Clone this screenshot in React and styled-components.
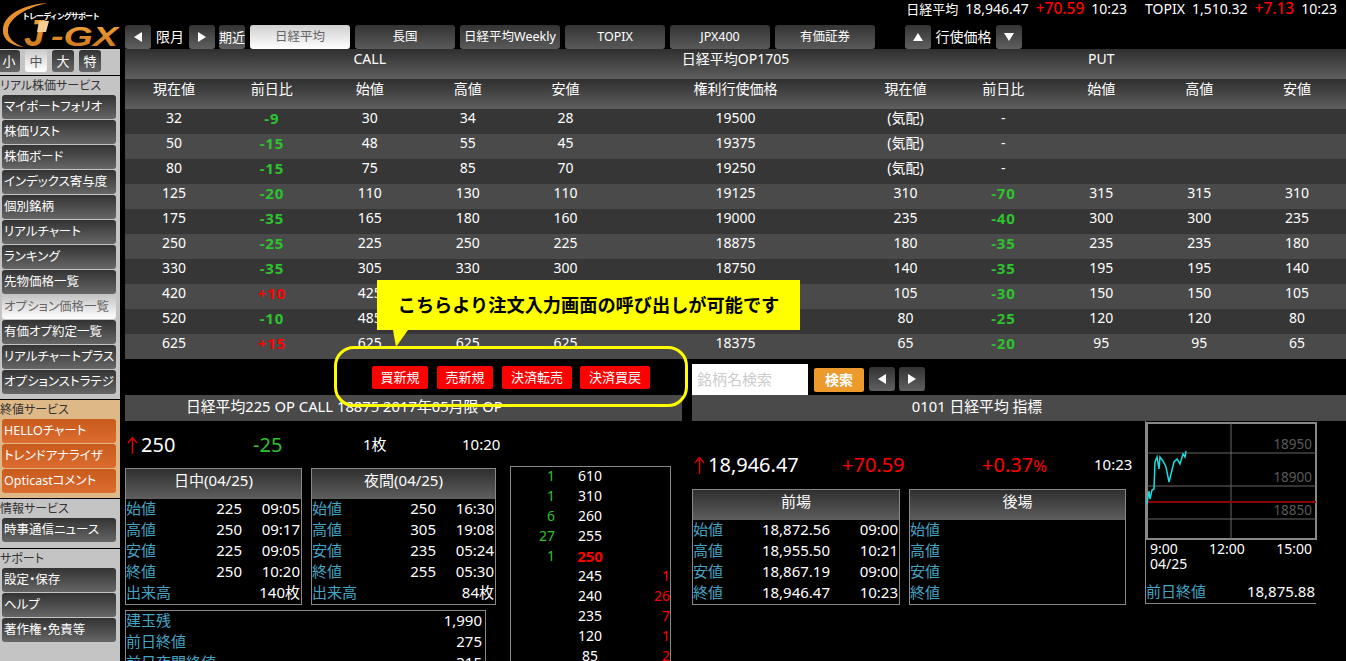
import React from 'react';
import styled, { createGlobalStyle, css } from 'styled-components';

const BAR = 'linear-gradient(#2f2f2f, #5e5e5e)';
const CYAN = '#45a4c4';
const GREEN = '#2ec22e';
const RED = '#ff0000';

const GlobalStyle = createGlobalStyle`
  html, body { margin: 0; padding: 0; background: #000; }
  body {
    color: #fff;
    font-family: "Noto Sans", "Noto Sans CJK JP", sans-serif;
    font-size: 14px;
    line-height: 1;
    overflow: hidden;
  }
  * { box-sizing: border-box; }
`;

const Page = styled.div`
  position: relative;
  width: 1346px;
  height: 661px;
  overflow: hidden;
  background: #000;
`;

const Header = styled.header`
  display: flex;
  height: 49px;
`;

const LogoBox = styled.div`
  width: 125px;
  flex: none;
`;

const HeaderRight = styled.div`
  flex: 1;
  display: flex;
  flex-direction: column;
`;

const Ticker = styled.div`
  height: 25px;
  padding: 1px 9px 8px 0;
  display: flex;
  justify-content: flex-end;
  align-items: center;
  gap: 7px;
  font-size: 14px;
`;

const TickerName = styled.span`
  font-size: 13px;
`;

const TickerGap = styled.span`
  width: 4px;
`;

const Up = styled.span`
  color: ${RED};
  font-size: 15.5px;
  font-weight: 500;
`;

const TabRow = styled.nav`
  height: 24px;
  display: flex;
  align-items: stretch;
`;

const ArrowButton = styled.button`
  width: 26px;
  height: 24px;
  flex: none;
  padding: 0;
  border: 0;
  border-radius: 3px;
  background: linear-gradient(#333, #606060);
  display: flex;
  align-items: center;
  justify-content: center;
  margin: ${(p) => p.$margin || 0};
  &::before {
    content: '';
    display: block;
    border-style: solid;
    border-color: transparent;
    ${(p) => p.$dir === 'left' && css`border-width: 5px 8px 5px 0; border-right-color: #fff;`}
    ${(p) => p.$dir === 'right' && css`border-width: 5px 0 5px 8px; border-left-color: #fff;`}
    ${(p) => p.$dir === 'up' && css`border-width: 0 5px 8px 5px; border-bottom-color: #fff;`}
    ${(p) => p.$dir === 'down' && css`border-width: 8px 5px 0 5px; border-top-color: #fff;`}
  }
`;

const TabLabel = styled.span`
  width: ${(p) => p.$width}px;
  flex: none;
  display: flex;
  align-items: center;
  justify-content: center;
  white-space: nowrap;
`;

const Near = styled.span`
  width: 26px;
  margin: 0 5px 0 4px;
  flex: none;
  border-radius: 3px;
  background: linear-gradient(#333, #606060);
  font-size: 13px;
  display: flex;
  align-items: center;
  justify-content: center;
  white-space: nowrap;
`;

const Tab = styled.div`
  width: 100px;
  flex: none;
  margin-right: 5px;
  border-radius: 3px;
  font-size: 12.5px;
  display: flex;
  align-items: center;
  justify-content: center;
  white-space: nowrap;
  ${(p) => (p.$active
    ? css`background: linear-gradient(#cfcfcf, #fff); color: #666;`
    : css`background: linear-gradient(#333, #5a5a5a); color: #fff;`)}
`;

const Body = styled.div`
  display: flex;
  height: 612px;
`;

const Sidebar = styled.aside`
  width: 120px;
  flex: none;
  margin-right: 5px;
  background: #c4c4c4;
  overflow: hidden;
`;

const SizeRow = styled.div`
  display: flex;
  gap: 5px;
  padding-top: 1px;
  margin-left: -2px;
  height: 27px;
  border-bottom: 1px solid #000;
`;

const SizeButton = styled.div`
  width: 22px;
  height: 22px;
  border-radius: 3px;
  font-size: 13px;
  display: flex;
  align-items: center;
  justify-content: center;
  ${(p) => (p.$active
    ? css`background: linear-gradient(#ccc, #fff); color: #555;`
    : css`background: linear-gradient(#333, #666); color: #fff;`)}
`;

const Section = styled.section`
  height: ${(p) => p.$height}px;
  background: ${(p) => (p.$orange ? '#deb887' : 'transparent')};
  ${(p) => p.$line && 'border-bottom: 1px solid #000;'}
`;

const SectionTitle = styled.div`
  height: 19px;
  font-size: 12px;
  color: #333;
  display: flex;
  align-items: center;
  white-space: nowrap;
  font-feature-settings: "palt";
`;

const MenuButton = styled.div`
  height: 24px;
  margin: 0 4px 1px 2px;
  padding-left: 2px;
  border-radius: 3px;
  font-size: 12.5px;
  display: flex;
  align-items: center;
  white-space: nowrap;
  overflow: hidden;
  font-feature-settings: "palt";
  background: linear-gradient(#333, #666);
  color: #fff;
  ${(p) => p.$active && css`background: linear-gradient(#c4c4c4, #fff); color: #666;`}
  ${(p) => p.$orange && css`background: linear-gradient(#c85a1c, #dc6c30);`}
`;

const Main = styled.main`
  flex: 1;
  min-width: 0;
`;

const OptionGrid = styled.div`
  display: grid;
  grid-template-columns: repeat(5, 1fr) 242px repeat(5, 1fr);
  height: ${(p) => p.$height}px;
  padding-bottom: ${(p) => p.$lift}px;
  align-items: center;
  text-align: center;
  background: ${(p) => p.$bg};
`;

const Wide = styled.div`
  grid-column: span 5;
`;

const Change = styled.span`
  color: ${(p) => p.$color};
  font-weight: 700;
  font-size: 15px;
  letter-spacing: 0.8px;
`;

const ActionRow = styled.div`
  height: 36px;
  display: flex;
  align-items: flex-start;
  padding-left: 247px;
`;

const RedButton = styled.div`
  width: ${(p) => p.$width}px;
  height: 23px;
  margin: 7px ${(p) => p.$gap}px 0 0;
  flex: none;
  background: ${RED};
  border-radius: 2px;
  font-size: 13px;
  display: flex;
  align-items: center;
  justify-content: center;
`;

const SearchBox = styled.div`
  width: 116px;
  height: 31px;
  margin: 5px 6px 0 42px;
  flex: none;
  padding-left: 5px;
  background: #fff;
  color: #ccc;
  font-size: 15px;
  display: flex;
  align-items: center;
`;

const SearchButton = styled.div`
  width: 50px;
  height: 24px;
  margin: 9px 5px 0 0;
  flex: none;
  background: #ec9a2c;
  border-radius: 2px;
  font-weight: 700;
  display: flex;
  align-items: center;
  justify-content: center;
`;

const Panels = styled.div`
  display: grid;
  grid-template-columns: 557px 654px;
  gap: 10px;
`;

const PanelTitle = styled.div`
  height: 26px;
  background: #4a4a4a;
  font-size: 14.8px;
  display: flex;
  align-items: center;
  justify-content: ${(p) => (p.$center ? 'center' : 'flex-start')};
  padding: 0 ${(p) => (p.$center ? 84 : 0)}px 4px ${(p) => (p.$center ? 0 : 61)}px;
  white-space: nowrap;
`;

const Quote = styled.div`
  display: flex;
  align-items: center;
  height: ${(p) => p.$height}px;
`;

const QuoteCell = styled.span`
  width: ${(p) => p.$width}px;
  flex: none;
  font-size: ${(p) => p.$size || 15}px;
  color: ${(p) => p.$color || '#fff'};
  white-space: nowrap;
`;

const Arrow = styled.svg`
  display: inline-block;
  vertical-align: -2px;
  margin: 0 3px 0 2px;
`;

const LowerLeft = styled.div`
  display: grid;
  grid-template-columns: 186px 199px 161px;
  grid-template-rows: 142px auto;
`;

const StatBox = styled.div`
  width: ${(p) => p.$width}px;
  height: ${(p) => p.$height}px;
  border: 1px solid #888;
  overflow: hidden;
  ${(p) => p.$span && 'grid-column: span 2;'}
`;

const StatHead = styled.div`
  height: 30px;
  padding-bottom: 8px;
  background: ${BAR};
  font-size: 15px;
  display: flex;
  align-items: center;
  justify-content: center;
`;

const StatRow = styled.div`
  height: 21px;
  padding: 0 ${(p) => (p.$inset ? 3 : 1)}px 2px 0;
  font-size: 15px;
  display: flex;
  align-items: center;
`;

const StatLabel = styled.span`
  color: ${CYAN};
  flex: 1;
  white-space: nowrap;
`;

const StatValue = styled.span`
  text-align: right;
  flex: none;
  width: ${(p) => (p.$width ? `${p.$width}px` : 'auto')};
  white-space: nowrap;
`;

const Book = styled.div`
  grid-column: 3;
  grid-row: 1 / span 2;
  margin-top: -2px;
  height: 240px;
  border: 1px solid #888;
  padding-top: 1px;
`;

const BookRow = styled.div`
  height: 20px;
  padding-bottom: 4px;
  display: grid;
  grid-template-columns: 44px 70px 45px;
  align-items: center;
`;

const BookBid = styled.span`
  color: ${GREEN};
  text-align: right;
`;

const BookAsk = styled.span`
  color: ${RED};
  text-align: right;
`;

const BookPrice = styled.span`
  text-align: center;
  ${(p) => p.$current && css`color: ${RED}; font-weight: 700; font-size: 15px;`}
`;

const LowerRight = styled.div`
  display: flex;
`;

const RightMain = styled.div`
  width: 453px;
  flex: none;
  padding-top: 19px;
`;

const BoxPair = styled.div`
  display: flex;
  gap: 9px;
`;

const ChartColumn = styled.div`
  width: 171px;
  height: 183px;
  flex: none;
  border-left: 1px solid #888;
  border-bottom: 1px solid #888;
  display: flex;
  flex-direction: column;
`;

const ChartFrame = styled.svg`
  display: block;
  margin-top: 1px;
`;

const AxisRow = styled.div`
  display: flex;
  justify-content: space-between;
  padding: 0 4px;
  height: 17px;
  align-items: center;
`;

const AxisDate = styled.div`
  padding-left: 4px;
  height: 20px;
`;

const CloseRow = styled.div`
  margin-top: auto;
  height: 23px;
  font-size: 15px;
  display: flex;
  justify-content: space-between;
  align-items: center;
  padding-right: 1px;
`;

const Callout = styled.div`
  position: absolute;
  left: 377px;
  top: 280px;
  width: 423px;
  height: 50px;
  background: #ffff00;
  color: #000;
  font-size: 18.2px;
  font-weight: 700;
  display: flex;
  align-items: center;
  justify-content: center;
  &::after {
    content: '';
    position: absolute;
    left: 16px;
    top: 50px;
    width: 15px;
    height: 17px;
    background: #ffff00;
    clip-path: polygon(0 0, 100% 0, 3px 100%);
  }
`;

const Ring = styled.div`
  position: absolute;
  left: 334px;
  top: 346px;
  width: 354px;
  height: 61px;
  border: 3px solid #ffff00;
  border-radius: 20px;
`;

const MENU_MAIN = [
  'マイポートフォリオ', '株価リスト', '株価ボード', 'インデックス寄与度', '個別銘柄', 'リアルチャート',
  'ランキング', '先物価格一覧', 'オプション価格一覧', '有価オプ約定一覧', 'リアルチャートプラス', 'オプションストラテジ',
];
const MENU_CLOSE = ['HELLOチャート', 'トレンドアナライザ', 'Opticastコメント'];
const MENU_SUPPORT = ['設定・保存', 'ヘルプ', '著作権・免責等'];
const TABS = ['日経平均', '長国', '日経平均Weekly', 'TOPIX', 'JPX400', '有価証券'];
const COLUMNS = ['現在値', '前日比', '始値', '高値', '安値'];

const OPTION_ROWS = [
  ['32', '-9', '30', '34', '28', '19500', '(気配)', '-', '', '', ''],
  ['50', '-15', '48', '55', '45', '19375', '(気配)', '-', '', '', ''],
  ['80', '-15', '75', '85', '70', '19250', '(気配)', '-', '', '', ''],
  ['125', '-20', '110', '130', '110', '19125', '310', '-70', '315', '315', '310'],
  ['175', '-35', '165', '180', '160', '19000', '235', '-40', '300', '300', '235'],
  ['250', '-25', '225', '250', '225', '18875', '180', '-35', '235', '235', '180'],
  ['330', '-35', '305', '330', '300', '18750', '140', '-35', '195', '195', '140'],
  ['420', '+10', '425', '', '', '', '105', '-30', '150', '150', '105'],
  ['520', '-10', '485', '', '', '', '80', '-25', '120', '120', '80'],
  ['625', '+15', '625', '625', '625', '18375', '65', '-20', '95', '95', '65'],
];

const BOOK = [
  ['1', '610', ''], ['1', '310', ''], ['6', '260', ''], ['27', '255', ''], ['1', '250', ''],
  ['', '245', '1'], ['', '240', '26'], ['', '235', '7'], ['', '120', '1'], ['', '85', '2'],
];

const DAY = [['始値', '225', '09:05'], ['高値', '250', '09:17'], ['安値', '225', '09:05'], ['終値', '250', '10:20']];
const NIGHT = [['始値', '250', '16:30'], ['高値', '305', '19:08'], ['安値', '235', '05:24'], ['終値', '255', '05:30']];
const AM = [['始値', '18,872.56', '09:00'], ['高値', '18,955.50', '10:21'], ['安値', '18,867.19', '09:00'], ['終値', '18,946.47', '10:23']];
const PM = ['始値', '高値', '安値', '終値'];

const CHART_POINTS = '1,82 3,69 4,77 6,68 8,67 9,40 11,35 13,47 14,35 17,39 20,45 23,60 25,52 28,40 31,37 34,42 37,32 39,35 40,29';

const Logo = () => (
  <svg width="125" height="49" viewBox="0 0 125 49">
    <defs>
      <linearGradient id="logoFill" x1="0" y1="0" x2="0" y2="1">
        <stop offset="0" stopColor="#f4a63c" />
        <stop offset="1" stopColor="#c9701a" />
      </linearGradient>
    </defs>
    <path d="M48 3 C25 4 4 14 3 29 C2 40 12 46 24 47 C14 44 7 38 8 29 C10 17 28 7 48 3 Z" fill="#e8912c" />
    <text x="22" y="19" fontSize="8" fontWeight="700" fill="#fff" textLength="78" fontFamily="Noto Sans CJK JP">トレーディングサポート</text>
    <text x="24" y="46" fontSize="37" fontWeight="700" fontStyle="italic" fill="url(#logoFill)" fontFamily="Liberation Sans">J</text>
    <text x="51" y="46" fontSize="28" fontWeight="700" fontStyle="italic" fill="url(#logoFill)" textLength="67" lengthAdjust="spacingAndGlyphs" fontFamily="Liberation Sans">-GX</text>
    <path d="M39 21 L49 21 L46 32 L37 32 Z" fill="#f6cd93" />
  </svg>
);

const RedArrow = () => (
  <Arrow width="11" height="18" viewBox="0 0 11 18" fill="none" stroke="#e00000" strokeWidth="1.4">
    <path d="M5.5 18 V2 M1 7 L5.5 1.5 L10 7" />
  </Arrow>
);

const Chart = () => (
  <ChartFrame width="171" height="118" viewBox="0 0 171 118">
    <rect x="1" y="1" width="169" height="116" fill="#000" stroke="#888" strokeWidth="2" />
    <path d="M85 1 V117 M1 31 H170 M1 64 H170 M1 97 H170" stroke="#666" strokeWidth="1" fill="none" />
    <path d="M1 80 H170" stroke="#8a0000" strokeWidth="2" fill="none" />
    <polyline points={CHART_POINTS} fill="none" stroke="#19dcdc" strokeWidth="1.5" />
    {['18950', '18900', '18850'].map((label, i) => (
      <text key={label} x="166" y={27 + i * 33} fontSize="13.5" textAnchor="end" fill="#5a5a5a" fontFamily="Noto Sans">{label}</text>
    ))}
  </ChartFrame>
);

const changeColor = (value) => (value.startsWith('+') ? RED : GREEN);

const StatTable = ({ title, rows, width, valueWidth, timeWidth, volume }) => (
  <StatBox $width={width} $height={volume === undefined ? 116 : 137}>
    <StatHead>{title}</StatHead>
    {rows.map(([label, value, time]) => (
      <StatRow key={label}>
        <StatLabel>{label}</StatLabel>
        <StatValue $width={valueWidth}>{value}</StatValue>
        <StatValue $width={timeWidth}>{time}</StatValue>
      </StatRow>
    ))}
    {volume !== undefined && (
      <StatRow>
        <StatLabel>出来高</StatLabel>
        <StatValue>{volume}</StatValue>
      </StatRow>
    )}
  </StatBox>
);

const App = () => (
  <Page>
    <GlobalStyle />
    <Header>
      <LogoBox><Logo /></LogoBox>
      <HeaderRight>
        <Ticker>
          <TickerName>日経平均</TickerName>
          <span>18,946.47</span>
          <Up>+70.59</Up>
          <span>10:23</span>
          <TickerGap />
          <span>TOPIX</span>
          <span>1,510.32</span>
          <Up>+7.13</Up>
          <span>10:23</span>
        </Ticker>
        <TabRow>
          <ArrowButton $dir="left" />
          <TabLabel $width="38">限月</TabLabel>
          <ArrowButton $dir="right" />
          <Near>期近</Near>
          {TABS.map((tab, i) => <Tab key={tab} $active={i === 0}>{tab}</Tab>)}
          <ArrowButton $dir="up" $margin="0 0 0 25px" />
          <TabLabel $width="65">行使価格</TabLabel>
          <ArrowButton $dir="down" />
        </TabRow>
      </HeaderRight>
    </Header>
    <Body>
      <Sidebar>
        <SizeRow>
          {['小', '中', '大', '特'].map((size, i) => <SizeButton key={size} $active={i === 1}>{size}</SizeButton>)}
        </SizeRow>
        <Section $height="324" $line>
          <SectionTitle>リアル株価サービス</SectionTitle>
          {MENU_MAIN.map((item) => <MenuButton key={item} $active={item === 'オプション価格一覧'}>{item}</MenuButton>)}
        </Section>
        <Section $height="99" $orange $line>
          <SectionTitle>終値サービス</SectionTitle>
          {MENU_CLOSE.map((item) => <MenuButton key={item} $orange>{item}</MenuButton>)}
        </Section>
        <Section $height="50" $line>
          <SectionTitle>情報サービス</SectionTitle>
          <MenuButton>時事通信ニュース</MenuButton>
        </Section>
        <Section $height="112">
          <SectionTitle>サポート</SectionTitle>
          {MENU_SUPPORT.map((item) => <MenuButton key={item}>{item}</MenuButton>)}
        </Section>
      </Sidebar>
      <Main>
        <OptionGrid $height="30" $lift="10" $bg={BAR}>
          <Wide>CALL</Wide>
          <div>日経平均OP1705</div>
          <Wide>PUT</Wide>
        </OptionGrid>
        <OptionGrid $height="30" $lift="10" $bg={BAR}>
          {COLUMNS.map((c) => <div key={`c${c}`}>{c}</div>)}
          <div>権利行使価格</div>
          {COLUMNS.map((c) => <div key={`p${c}`}>{c}</div>)}
        </OptionGrid>
        {OPTION_ROWS.map((row, r) => (
          <OptionGrid key={row[0]} $height="25" $lift="7" $bg={r % 2 ? '#4a4a4a' : '#363636'}>
            {row.map((cell, i) => (
              <div key={`${row[0]}-${i}`}>
                {(i === 1 || i === 7) && cell !== '-' ? <Change $color={changeColor(cell)}>{cell}</Change> : cell}
              </div>
            ))}
          </OptionGrid>
        ))}
        <ActionRow>
          <RedButton $width="56" $gap="9">買新規</RedButton>
          <RedButton $width="56" $gap="9">売新規</RedButton>
          <RedButton $width="70" $gap="8">決済転売</RedButton>
          <RedButton $width="70" $gap="0">決済買戻</RedButton>
          <SearchBox>銘柄名検索</SearchBox>
          <SearchButton>検索</SearchButton>
          <ArrowButton $dir="left" $margin="8px 4px 0 0" />
          <ArrowButton $dir="right" $margin="8px 0 0 0" />
        </ActionRow>
        <Panels>
          <div>
            <PanelTitle>日経平均225 OP CALL 18875 2017年05月限 OP</PanelTitle>
            <Quote $height="47">
              <QuoteCell $width="128" $size="20"><RedArrow />250</QuoteCell>
              <QuoteCell $width="110" $size="20" $color={GREEN}>-25</QuoteCell>
              <QuoteCell $width="99">1枚</QuoteCell>
              <QuoteCell $width="50">10:20</QuoteCell>
            </Quote>
            <LowerLeft>
              <StatTable title="日中(04/25)" rows={DAY} width={177} valueWidth={45} timeWidth={58} volume="140枚" />
              <StatTable title="夜間(04/25)" rows={NIGHT} width={185} valueWidth={45} timeWidth={58} volume="84枚" />
              <Book>
                {BOOK.map(([bid, price, ask]) => (
                  <BookRow key={price}>
                    <BookBid>{bid}</BookBid>
                    <BookPrice $current={price === '250'}>{price}</BookPrice>
                    <BookAsk>{ask}</BookAsk>
                  </BookRow>
                ))}
              </Book>
              <StatBox $width={361} $height={70} $span>
                <StatRow $inset>
                  <StatLabel>建玉残</StatLabel>
                  <StatValue>1,990</StatValue>
                </StatRow>
                <StatRow $inset>
                  <StatLabel>前日終値</StatLabel>
                  <StatValue>275</StatValue>
                </StatRow>
                <StatRow $inset>
                  <StatLabel>前日夜間終値</StatLabel>
                  <StatValue>315</StatValue>
                </StatRow>
              </StatBox>
            </LowerLeft>
          </div>
          <div>
            <PanelTitle $center>0101 日経平均 指標</PanelTitle>
            <LowerRight>
              <RightMain>
                <Quote $height="49">
                  <QuoteCell $width="150" $size="20"><RedArrow />18,946.47</QuoteCell>
                  <QuoteCell $width="140" $size="20" $color={RED}>+70.59</QuoteCell>
                  <QuoteCell $width="112" $size="20" $color={RED}>+0.37<small>%</small></QuoteCell>
                  <QuoteCell $width="44">10:23</QuoteCell>
                </Quote>
                <BoxPair>
                  <StatTable title="前場" rows={AM} width={208} valueWidth={75} timeWidth={68} />
                  <StatBox $width={217} $height={116}>
                    <StatHead>後場</StatHead>
                    {PM.map((label) => <StatRow key={label}><StatLabel>{label}</StatLabel></StatRow>)}
                  </StatBox>
                </BoxPair>
              </RightMain>
              <ChartColumn>
                <Chart />
                <AxisRow>
                  <span>9:00</span>
                  <span>12:00</span>
                  <span>15:00</span>
                </AxisRow>
                <AxisDate>04/25</AxisDate>
                <CloseRow>
                  <StatLabel>前日終値</StatLabel>
                  <span>18,875.88</span>
                </CloseRow>
              </ChartColumn>
            </LowerRight>
          </div>
        </Panels>
      </Main>
    </Body>
    <Callout>こちらより注文入力画面の呼び出しが可能です</Callout>
    <Ring />
  </Page>
);

export default App;
